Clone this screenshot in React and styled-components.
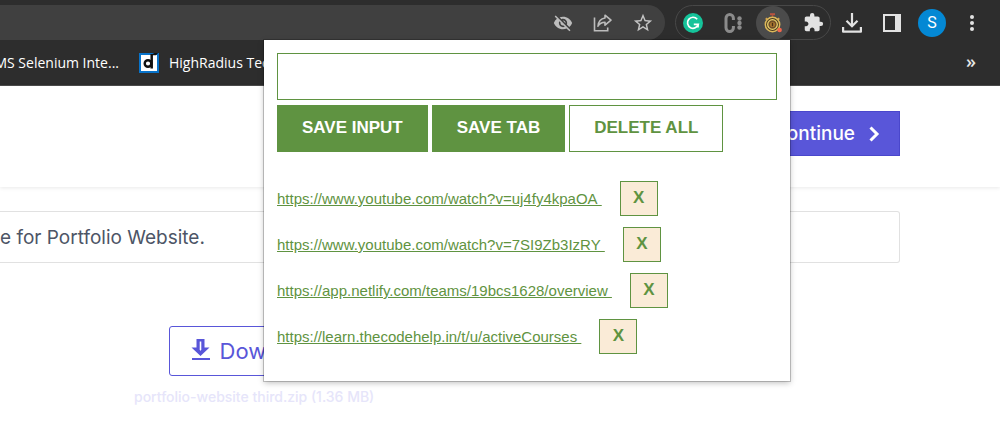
import React from "react";
import styled, { createGlobalStyle, css } from "styled-components";
import { MdVisibilityOff, MdStarBorder, MdExtension } from "react-icons/md";

const green = "#5f9341";
const indigo = "#5956d9";

const GlobalStyle = createGlobalStyle`
  *, *::before, *::after { box-sizing: border-box; }
  body {
    margin: 0;
    background: #fff;
    font-family: Inter, "Liberation Sans", sans-serif;
    overflow-x: hidden;
  }
  button, input { font: inherit; margin: 0; }
  svg { display: block; flex: none; }
`;

const Browser = styled.div`
  position: relative;
  overflow: hidden;
  min-height: 100vh;
`;

const Toolbar = styled.header`
  display: flex;
  align-items: center;
  height: 40px;
  padding: 5px 8px 0 0;
  background: #2d2d2d;
`;

const AddressBar = styled.div`
  flex: 1;
  display: flex;
  align-items: center;
  justify-content: flex-end;
  height: 35px;
  margin-right: 10px;
  padding-right: 2px;
  background: #404040;
  border-radius: 0 18px 18px 0;
`;

const Extensions = styled.div`
  display: flex;
  align-items: center;
  gap: 6px;
  height: 35px;
  margin-right: 1px;
  border: 1px solid #484848;
  border-radius: 18px;
`;

const IconButton = styled.button`
  display: flex;
  align-items: center;
  justify-content: center;
  width: ${(p) => (p.$round ? 34 : 40)}px;
  height: 34px;
  padding: 0;
  border: 0;
  border-radius: 17px;
  background: ${(p) => (p.$active ? "#4b4b4b" : "transparent")};
  color: ${(p) => p.$tone || "#e2e2e2"};
`;

const Avatar = styled.span`
  display: flex;
  align-items: center;
  justify-content: center;
  width: 28px;
  height: 28px;
  border-radius: 50%;
  background: #0488d4;
  color: #fff;
  font: 16px Roboto, sans-serif;
`;

const BookmarksBar = styled.nav`
  display: flex;
  align-items: center;
  height: 46px;
  background: #2d2d2d;
  border-bottom: 1px solid #4c4c4c;
  font: 14px "Open Sans", "Noto Sans", sans-serif;
`;

const Bookmark = styled.a`
  display: flex;
  align-items: center;
  justify-content: flex-end;
  gap: 10px;
  color: #fff;
  text-decoration: none;
  white-space: nowrap;
  ${(p) =>
    p.$clipped &&
    css`
      width: 119px;
      margin-right: 20px;
      overflow: hidden;
    `}
`;

const MoreBookmarks = styled.button`
  margin-left: auto;
  padding: 0 24px 3px 0;
  border: 0;
  background: none;
  color: #e6e6e6;
  font: 600 18px "Open Sans", sans-serif;
`;

const PageHeader = styled.header`
  display: flex;
  justify-content: flex-end;
  padding: 25px 100px 31px;
  box-shadow: 0 1px 4px rgba(0, 0, 0, 0.09);
`;

const ContinueButton = styled.button`
  display: flex;
  align-items: center;
  gap: 14px;
  height: 45px;
  padding: 0 19px 0 24px;
  border: 1px solid #4a47cc;
  background: ${indigo};
  color: #fff;
  font-size: 19px;
  font-weight: 500;
`;

const Notice = styled.p`
  height: 52px;
  margin: 24px 100px 63px 0;
  border: 1px solid #e1e1e1;
  border-left: 0;
  border-radius: 0 3px 3px 0;
  color: #4d5566;
  font-size: 19px;
  line-height: 51px;
`;

const DownloadArea = styled.section`
  display: flex;
  flex-direction: column;
  align-items: center;
  gap: 12px;
  width: fit-content;
  padding-left: 134px;
`;

const DownloadButton = styled.button`
  display: flex;
  align-items: center;
  gap: 9px;
  height: 50px;
  padding: 0 15px 0 21px;
  border: 1px solid ${indigo};
  border-radius: 3px;
  background: #fff;
  color: ${indigo};
  font-size: 22px;
`;

const FileName = styled.span`
  color: #e6e5fa;
  font-size: 14px;
  font-weight: 500;
  line-height: 18px;
`;

const Popup = styled.aside`
  position: absolute;
  top: 40px;
  right: 210px;
  width: 526px;
  padding: 13px 13px 27px;
  background: #fff;
  box-shadow: 0 0 0 1px rgba(0, 0, 0, 0.2), 0 2px 6px rgba(0, 0, 0, 0.25);
  font-family: "Liberation Sans", Arial, sans-serif;
`;

const UrlInput = styled.input`
  display: block;
  width: 100%;
  height: 47px;
  padding: 10px;
  border: 1px solid ${green};
  background: #fff;
  outline: 0;
`;

const Actions = styled.div`
  display: flex;
  gap: 4px;
  margin-top: 5px;
`;

const ActionButton = styled.button`
  height: 47px;
  padding: 0 24px 2px;
  border: 1px solid ${green};
  background: ${(p) => (p.$outline ? "#fff" : green)};
  color: ${(p) => (p.$outline ? green : "#fff")};
  font-size: 17px;
  font-weight: 700;
  white-space: nowrap;
`;

const SavedList = styled.ul`
  display: flex;
  flex-direction: column;
  gap: 11px;
  margin: 29px 0 0;
  padding: 0;
  list-style: none;
`;

const SavedItem = styled.li`
  display: flex;
  align-items: center;
  gap: 18px;
`;

const SavedLink = styled.a`
  color: ${green};
  font-size: 15px;
  white-space: pre;
`;

const RemoveButton = styled.button`
  width: 38px;
  height: 35px;
  padding: 0 0 2px;
  border: 1px solid ${green};
  background: #faebd7;
  color: ${green};
  font-size: 17px;
  font-weight: 700;
`;

const ShareIcon = () => (
  <svg width="20" height="20" viewBox="0 0 20 20" fill="none" stroke="currentColor" strokeWidth="1.6">
    <path d="M1.500 4.500v13.200h13.200v-3.200" />
    <path d="M12 2.200l6 5-6 5V9.300c-3.200 0-5.400 1.200-7 3.900.4-4.600 2.700-7.600 7-8.200z" strokeLinejoin="round" />
  </svg>
);

const GrammarlyIcon = () => (
  <svg width="20" height="20" viewBox="0 0 20 20" fill="none">
    <circle cx="10" cy="10" r="10" fill="#15c39a" />
    <path d="M14.200 6.200A5.500 5.500 0 1 0 15.300 11.300H10.800" stroke="#fff" strokeWidth="1.700" />
    <path d="M15 14.500v-3.500" stroke="#fff" strokeWidth="1.700" />
  </svg>
);

const ColonIcon = () => (
  <svg width="18" height="20" viewBox="0 0 18 20" fill="none">
    <path d="M9.400 7V5.200a3.700 3.700 0 0 0-7.400 0v9.600a3.700 3.700 0 0 0 7.400 0V13" stroke="#8b8b8b" strokeWidth="3" />
    <g fill="#8b8b8b">
      <circle cx="15.500" cy="5.500" r="2.200" />
      <circle cx="15.500" cy="10" r="2.200" />
      <circle cx="15.500" cy="14.500" r="2.200" />
    </g>
  </svg>
);

const MedalIcon = () => (
  <svg width="18" height="20" viewBox="0 0 18 20" fill="none">
    <path d="M6 1.200h5" stroke="#b9533f" strokeWidth="2" />
    <path d="M8.500 2v3" stroke="#a9503c" strokeWidth="1.500" />
    <path d="M1.800 5.200l1.500 1.500M15.200 5.200l-1.500 1.500" stroke="#d3a14b" strokeWidth="2" />
    <circle cx="8.500" cy="11.500" r="7.200" fill="#4a3a22" stroke="#dcb95a" strokeWidth="1.500" />
    <circle cx="8.500" cy="11.500" r="4.800" fill="#70502a" stroke="#e8d06e" strokeWidth="1.300" />
    <circle cx="8.500" cy="11.500" r="2.600" fill="#a8752f" />
    <path d="M8.500 9.800v3.400" stroke="#463018" strokeWidth="1.300" />
    <circle cx="15.600" cy="17" r="2.300" fill="#f2664d" />
  </svg>
);

const TrayDownloadIcon = () => (
  <svg width="20" height="20" viewBox="0 0 20 20" fill="none" stroke="currentColor" strokeWidth="2.200">
    <path d="M10 0v13M4.500 7.800l5.500 5.500 5.500-5.500" />
    <path d="M1.100 14v4.700h17.800V14" strokeLinejoin="round" />
  </svg>
);

const SidePanelIcon = () => (
  <svg width="18" height="18" viewBox="0 0 18 18">
    <path d="M0 0h18v18H0zM2 2v14h10V2z" fill="currentColor" fillRule="evenodd" />
  </svg>
);

const KebabIcon = () => (
  <svg width="4" height="16" viewBox="0 0 4 16" fill="currentColor">
    <circle cx="2" cy="2" r="2" />
    <circle cx="2" cy="8" r="2" />
    <circle cx="2" cy="14" r="2" />
  </svg>
);

const LetterFavicon = () => (
  <svg width="20" height="20" viewBox="0 0 20 20" fill="none">
    <path d="M0 0h20v20H0z" fill="#0873ca" />
    <path d="M2 2h16v16H2z" fill="#fff" />
    <circle cx="9" cy="10.500" r="3.300" stroke="#111" strokeWidth="2.400" />
    <path d="M12.700 1v14.500" stroke="#111" strokeWidth="2.500" />
    <path d="M11.500 2l4-2H19l-2 2.200h-3z" fill="#111" />
  </svg>
);

const ChevronIcon = () => (
  <svg width="11" height="16" viewBox="0 0 11 16" fill="none" stroke="currentColor" strokeWidth="3">
    <path d="M1.500 1.500L8 8l-6.500 6.500" />
  </svg>
);

const DownloadIcon = () => (
  <svg width="20" height="26" viewBox="0 0 20 26" fill="none">
    <path d="M5.500 1h8v8.500h5L9.500 18l-9-8.500h5z" fill="currentColor" />
    <path d="M8.700 3.500h1.600v8l-.8 1.500-.8-1.500z" fill="#fff" />
    <path d="M1 21h18" stroke="currentColor" strokeWidth="2" />
  </svg>
);

const savedUrls = [
  "https://www.youtube.com/watch?v=uj4fy4kpaOA",
  "https://www.youtube.com/watch?v=7SI9Zb3IzRY",
  "https://app.netlify.com/teams/19bcs1628/overview",
  "https://learn.thecodehelp.in/t/u/activeCourses",
];

export default function App() {
  return (
    <Browser>
      <GlobalStyle />
      <Toolbar>
        <AddressBar>
          <IconButton $tone="#bcbcbc" aria-label="Tracking blocked"><MdVisibilityOff size={20} /></IconButton>
          <IconButton $tone="#bcbcbc" aria-label="Share this page"><ShareIcon /></IconButton>
          <IconButton $tone="#c4c4c4" aria-label="Bookmark this tab"><MdStarBorder size={22} /></IconButton>
        </AddressBar>
        <Extensions>
          <IconButton $round aria-label="Writing assistant"><GrammarlyIcon /></IconButton>
          <IconButton $round aria-label="Cookie extension"><ColonIcon /></IconButton>
          <IconButton $round $active aria-label="Lead tracker"><MedalIcon /></IconButton>
          <IconButton $round aria-label="Extensions"><MdExtension size={21} /></IconButton>
        </Extensions>
        <IconButton aria-label="Downloads"><TrayDownloadIcon /></IconButton>
        <IconButton aria-label="Side panel"><SidePanelIcon /></IconButton>
        <IconButton aria-label="Profile"><Avatar>S</Avatar></IconButton>
        <IconButton aria-label="Browser menu"><KebabIcon /></IconButton>
      </Toolbar>
      <BookmarksBar>
        <Bookmark href="#" $clipped>MS Selenium Inte...</Bookmark>
        <Bookmark href="#"><LetterFavicon />HighRadius Tech</Bookmark>
        <MoreBookmarks aria-label="More bookmarks">»</MoreBookmarks>
      </BookmarksBar>

      <main>
        <PageHeader>
          <ContinueButton>Continue <ChevronIcon /></ContinueButton>
        </PageHeader>
        <Notice>e for Portfolio Website.</Notice>
        <DownloadArea>
          <DownloadButton><DownloadIcon />Download</DownloadButton>
          <FileName>portfolio-website third.zip (1.36 MB)</FileName>
        </DownloadArea>
      </main>

      <Popup>
        <UrlInput type="text" aria-label="URL to save" />
        <Actions>
          <ActionButton>SAVE INPUT</ActionButton>
          <ActionButton>SAVE TAB</ActionButton>
          <ActionButton $outline>DELETE ALL</ActionButton>
        </Actions>
        <SavedList>
          {savedUrls.map((url) => (
            <SavedItem key={url}>
              <SavedLink href={url}>{url + "\u00a0"}</SavedLink>
              <RemoveButton aria-label={`Remove ${url}`}>X</RemoveButton>
            </SavedItem>
          ))}
        </SavedList>
      </Popup>
    </Browser>
  );
}
